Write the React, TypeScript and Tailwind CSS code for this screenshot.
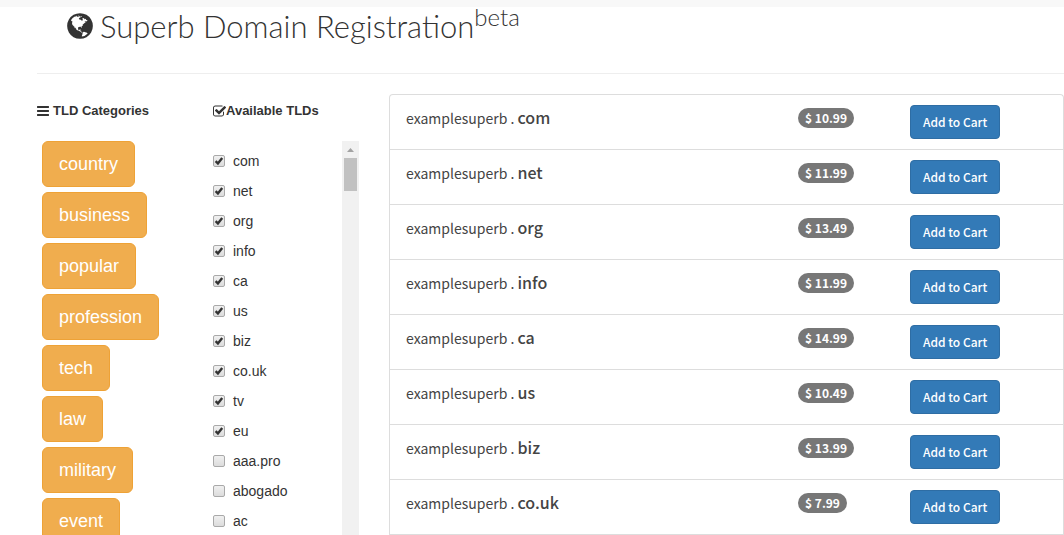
import { useState } from "react";

const categories = [
  "country",
  "business",
  "popular",
  "profession",
  "tech",
  "law",
  "military",
  "event"
];

const tlds = [
  { name: "com", checked: true },
  { name: "net", checked: true },
  { name: "org", checked: true },
  { name: "info", checked: true },
  { name: "ca", checked: true },
  { name: "us", checked: true },
  { name: "biz", checked: true },
  { name: "co.uk", checked: true },
  { name: "tv", checked: true },
  { name: "eu", checked: true },
  { name: "aaa.pro", checked: false },
  { name: "abogado", checked: false },
  { name: "ac", checked: false }
];

const results = [
  { tld: "com", price: "10.99" },
  { tld: "net", price: "11.99" },
  { tld: "org", price: "13.49" },
  { tld: "info", price: "11.99" },
  { tld: "ca", price: "14.99" },
  { tld: "us", price: "10.49" },
  { tld: "biz", price: "13.99" },
  { tld: "co.uk", price: "7.99" }
];

const GlobeIcon = () => (
  <svg viewBox="0 0 1792 1792" className="w-[30px] h-[30px] shrink-0" fill="currentColor" aria-hidden="true">
    <path d="M896 128q209 0 385.5 103t279.5 279.5 103 385.5-103 385.5-279.5 279.5-385.5 103-385.5-103-279.5-279.5-103-385.5 103-385.5 279.5-279.5 385.5-103zm274 521q-2 1-9.5 9.5t-13.5 9.5q2 0 4.5-5t5-11 3.5-7q6-7 22-15 14-6 52-12 34-8 51 11-2-2 9.5-13t14.5-12q3-2 15-4.5t15-7.5l2-22q-12 1-17.5-7t-6.5-21q0 2-6 8 0-7-4.5-8t-11.5 1-9 1q-10-3-15-7.5t-8-16.5-4-15q-2-5-9.5-11t-9.5-10q-1-2-2.5-5.5t-3-6.5-4-5.5-5.5-2.5-7 5-7.5 10-4.5 5q-3-2-6-1.5t-4.5 1-4.5 3-5 3.5q-3 2-8.5 3t-8.5 2q15-5-1-11-10-4-16-3 9-4 7.500-12t-8.500-14h5q-1-4-8.500-8.500t-17.500-8.500-13-6q-8-5-34-9.500t-33-.5q-5 6-4.500 10.500t4 14 3.500 12.500q1 6-5.500 13t-6.500 12q0 7 14 15.500t10 21.500q-3 8-16 16t-16 12q-5 8-1.500 18.500t10.500 16.500q2 2 1.500 4t-3.500 4.500-5.500 4-6.500 3.500l-3 2q-11 5-20.500-6t-13.500-26q-7-25-16-30-23-8-29 1-5-13-41-26-25-9-58-4 6-1 0-15-7-15-19-12 3-6 4-17.500t1-13.500q3-13 12-23 1-1 7-8.500t9.500-13.500.5-6q35 4 50-11 5-5 11.500-17t10.500-17q9-6 14-5.500t14.500 5.500 14.500 5.500q14 1 15.500-11t-7.500-20q12 1 3-17-4-7-8-9-12-4-27 5-8 4 2 8-1-1-9.500 10.500t-16.500 17.500-16-5q-1-1-5.500-13.500t-9.500-13.500q-8 0-16 15 3-8-11-15t-24-8q19-12-8-27-7-4-20.500-5t-19.500 4q-5 7-5.500 11.500t5 8 10.500 5.500 11.500 4 8.500 3q14 10 8 14-2 1-8.500 3.500t-11.500 4.500-6 4q-3 4 0 14t-2 14q-5-5-9-17.500t-7-16.500q7 9-25 6l-10-1q-4 0-16 2t-20.500 1-13.500-8q-4-8 0-20 1-4 4-2-4-3-11-9.500t-10-8.500q-46 15-94 41 6 1 12-1 5-2 13-6.500t10-5.500q34-14 42-7l5-5q14 16 20 25-7-4-30-1-20 6-22 12 7 12 5 18-4-3-11.500-10t-14.500-11-15-5q-16 0-22 1-146 80-235 222 7 7 12 8 4 1 5 9t2.500 11 11.500-3q9 8 3 19 1-1 44 27 19 17 21 21 3 11-10 18-1-2-9-9t-9-4q-3 5 .5 18.500t10.500 12.500q-7 0-9.500 16t-2.500 35.500-1 23.500l2 1q-3 12 5.500 34.500t21.500 19.500q-13 3 20 43 6 8 8 9 3 2 12 7.500t15 10 10 10.500q4 5 10 22.500t14 23.500q-2 6 9.500 20t10.500 23q-1 0-2.500 1t-2.500 1q3 7 15.500 14t15.500 13q1 3 2 10t3 11 8 2q2-20-24-62-15-25-17-29-3-5-5.500-15.500t-4.500-14.500q2 0 6 1.500t8.500 3.500 7.500 4 2 3q-3 7 2 17.500t12 18.500 17 19 12 13q6 6 14 19.500t0 13.500q9 0 20 10.500t17 19.500q5 8 8 26t5 24q2 7 8.500 13.500t12.500 9.500l16 8 13 7q5 2 18.500 10.500t21.500 11.500q10 4 16 4t14.500-2.500 13.500-3.500q15-2 29 15t21 21q36 19 55 11-2 1 .5 7.500t8 15.500 9 14.500 5.500 8.500q5 6 18 15t18 15q6-4 7-9-3 8 7 20t18 10q14-3 14-32-31 15-49-18 0-1-2.500-5.500t-4-8.500-2.500-8.500 0-7.500 5-3q9 0 10-3.500t-2-12.500-4-13q-1-8-11-20t-12-15q-5 9-16 8t-16-9q0 1-1.500 5.500t-1.500 6.500q-13 0-15-1 1-3 2.500-17.500t3.500-22.500q1-4 5.500-12t7.500-14.500 4-12.500-4.500-9.500-17.500-2.500q-19 1-26 20-1 3-3 10.500t-5 11.500-9 7q-7 3-24 2t-24-5q-13-8-22.500-29t-9.500-37q0-10 2.500-26.500t3-25-5.500-24.500q3-2 9-9.500t10-10.500q2-1 4.500-1.500t4.500 0 4-1.500 3-6q-1-1-4-3-3-3-4-3 7 3 28.500-1.500t27.500 1.500q15 11 22-2 0-1-2.500-9.500t-.5-13.500q5 27 29 9 3 3 15.500 5t17.500 5q3 2 7 5.500t5.500 4.500 5-.5 8.500-6.500q10 14 12 24 11 40 19 44 7 3 11 2t4.500-9.500 0-14-1.500-12.500l-1-8v-18l-1-8q-15-3-18.500-12t1.500-18.500 15-18.500q1-1 8-3.500t15.500-6.500 12.500-8q21-19 15-35 7 0 11-9-1 0-5-3t-7.500-5-4.500-2q9-5 2-16 5-3 7.500-11t7.500-10q9 12 21 2 7-8 1-16 5-7 20.500-10.500t18.500-9.500q7 2 8-2t1-12 3-12q4-5 15-9t13-5l17-11q3-4 0-4 18 2 31-11 10-11-6-20 3-6-3-9.500t-15-5.500q3-1 11.500-.5t10.500-1.500q15-10-7-16-17-5-43 12zm-163 877q206-36 351-189-3-3-12.500-4.500t-12.500-3.500q-18-7-24-8 1-7-2.500-13t-8-9-12.500-8-11-7q-2-2-7-6t-7-5.500-7.500-4.500-8.500-2-10 1l-3 1q-3 1-5.500 2.500t-5.500 3-4 3 0 2.500q-21-17-36-22-5-1-11-5.500t-10.500-7-10-1.500-11.500 7q-5 5-6 15t-2 13q-7-5 0-17.500t2-18.500q-3-6-10.500-4.500t-12 4.500-11.500 8.500-9 6.500-8.500 5.500-8.500 7.500q-3 4-6 12t-5 11q-2-4-11.500-6.500t-9.500-5.500q2 10 4 35t5 38q7 31-12 48-27 25-29 40-4 22 12 26 0 7-8 20.500t-7 21.500q0 6 2 16z" />
  </svg>
);

const BarsIcon = () => (
  <svg viewBox="128 128 1536 1536" className="w-3 h-3 shrink-0" fill="currentColor" aria-hidden="true">
    <path d="M1664 1344v128q0 26-19 45t-45 19h-1408q-26 0-45-19t-19-45v-128q0-26 19-45t45-19h1408q26 0 45 19t19 45zm0-512v128q0 26-19 45t-45 19h-1408q-26 0-45-19t-19-45v-128q0-26 19-45t45-19h1408q26 0 45 19t19 45zm0-512v128q0 26-19 45t-45 19h-1408q-26 0-45-19t-19-45v-128q0-26 19-45t45-19h1408q26 0 45 19t19 45z" />
  </svg>
);

const CheckSquareIcon = () => (
  <svg viewBox="64 64 1664 1664" className="w-[13px] h-[13px] shrink-0" fill="currentColor" aria-hidden="true">
    <path d="M1472 930v318q0 119-84.5 203.5t-203.5 84.5h-832q-119 0-203.5-84.5t-84.5-203.5v-832q0-119 84.5-203.5t203.5-84.5h832q63 0 117 25 15 7 18 23 3 17-9 29l-49 49q-10 10-23 10-3 0-9-2-23-6-45-6h-832q-66 0-113 47t-47 113v832q0 66 47 113t113 47h832q66 0 113-47t47-113v-254q0-13 9-22l64-64q10-10 23-10 6 0 12 3 20 8 20 29zm231-489l-814 814q-24 24-57 24t-57-24l-430-430q-24-24-24-57t24-57l110-110q24-24 57-24t57 24l263 263 647-647q24-24 57-24t57 24l110 110q24 24 24 57t-24 57z" />
  </svg>
);

const TldOption = ({ name, defaultChecked }: { name: string; defaultChecked: boolean }) => {
  const [checked, setChecked] = useState(defaultChecked);
  return (
    <li>
      <label className="flex items-center gap-2 h-[30px]">
        <span className="relative w-3 h-3 shrink-0">
          <input
            type="checkbox"
            checked={checked}
            onChange={(e) => setChecked(e.target.checked)}
            className="block appearance-none w-3 h-3 rounded-xs border border-[#a9a9a9] bg-linear-to-b from-[#f0f0f0] to-[#dcdcdc]"
          />
          {checked && (
            <svg viewBox="0 0 12 12" className="absolute inset-0 w-3 h-3 pointer-events-none" aria-hidden="true">
              <path d="M2.600 6.200 4.900 8.400 9.200 3" fill="none" stroke="#333" strokeWidth="2.4" />
            </svg>
          )}
        </span>
        {name}
      </label>
    </li>
  );
};

const ResultRow = ({ tld, price }: { tld: string; price: string }) => (
  <li className="grid grid-cols-[1fr_112px_153px] items-start h-[55px] pl-4 pt-[10px] border-b border-[#ddd]">
    <span className="text-sm leading-6">
      examplesuperb . <b className="text-base leading-6 font-medium">{tld}</b>
    </span>
    <span className="pt-[3px]">
      <span className="block w-fit rounded-[10px] bg-[#777] text-white text-xs leading-5 font-bold px-[7px]">
        $ {price}
      </span>
    </span>
    <span>
      <button className="block h-[34px] px-3 rounded-sm border border-[#2e6da4] bg-[#337ab7] text-white text-xs leading-5 font-medium">
        Add to Cart
      </button>
    </span>
  </li>
);

export default function App() {
  return (
    <div className="h-screen overflow-hidden bg-white text-[#333] text-sm font-['Liberation_Sans',Arial,sans-serif]">
      <div className="h-[7px] bg-[#f8f8f8]" />
      <div className="pl-[37px]">
        <header className="flex h-[67px] pl-7 pt-1 border-b border-[#eee]">
          <h1 className="flex items-start gap-[5px] font-light text-[31px] leading-[30px] font-['Lato',sans-serif]">
            <GlobeIcon />
            <span>
              Superb Domain Registration<sup className="text-2xl leading-none">beta</sup>
            </span>
          </h1>
        </header>

        <div className="grid grid-cols-[176px_176px_1fr] pt-5">
          <section>
            <h2 className="flex items-center gap-1 h-[34px] text-[13px] font-bold">
              <BarsIcon />
              TLD Categories
            </h2>
            <div className="flex flex-col items-start gap-[5px] pl-[5px] pt-[13px]">
              {categories.map((item) => (
                <button
                  key={item}
                  className="h-[46px] px-4 rounded-md border border-[#eea236] bg-[#f0ad4e] text-white text-lg"
                >
                  {item}
                </button>
              ))}
            </div>
          </section>

          <section>
            <h2 className="flex items-center h-[34px] text-[13px] font-bold">
              <CheckSquareIcon />
              Available TLDs
            </h2>
            <div className="flex justify-between pt-[13px] pr-[30px]">
              <ul className="pt-[5px]">
                {tlds.map((item) => (
                  <TldOption key={item.name} name={item.name} defaultChecked={item.checked} />
                ))}
              </ul>
              <div className="flex flex-col items-center w-[17px] bg-[#f1f1f1]">
                <svg viewBox="0 0 17 17" className="w-[17px] h-[17px]" aria-hidden="true">
                  <path d="M5 11h7L8.500 7z" fill="#a3a3a3" />
                </svg>
                <div className="w-[13px] h-[33px] bg-[#c1c1c1]" />
              </div>
            </div>
          </section>

          <ul className="border border-b-0 border-[#ddd] rounded-t-sm text-[#444] font-['Noto_Sans_CJK_SC',sans-serif]">
            {results.map((item) => (
              <ResultRow key={item.tld} tld={item.tld} price={item.price} />
            ))}
          </ul>
        </div>
      </div>
    </div>
  );
}
